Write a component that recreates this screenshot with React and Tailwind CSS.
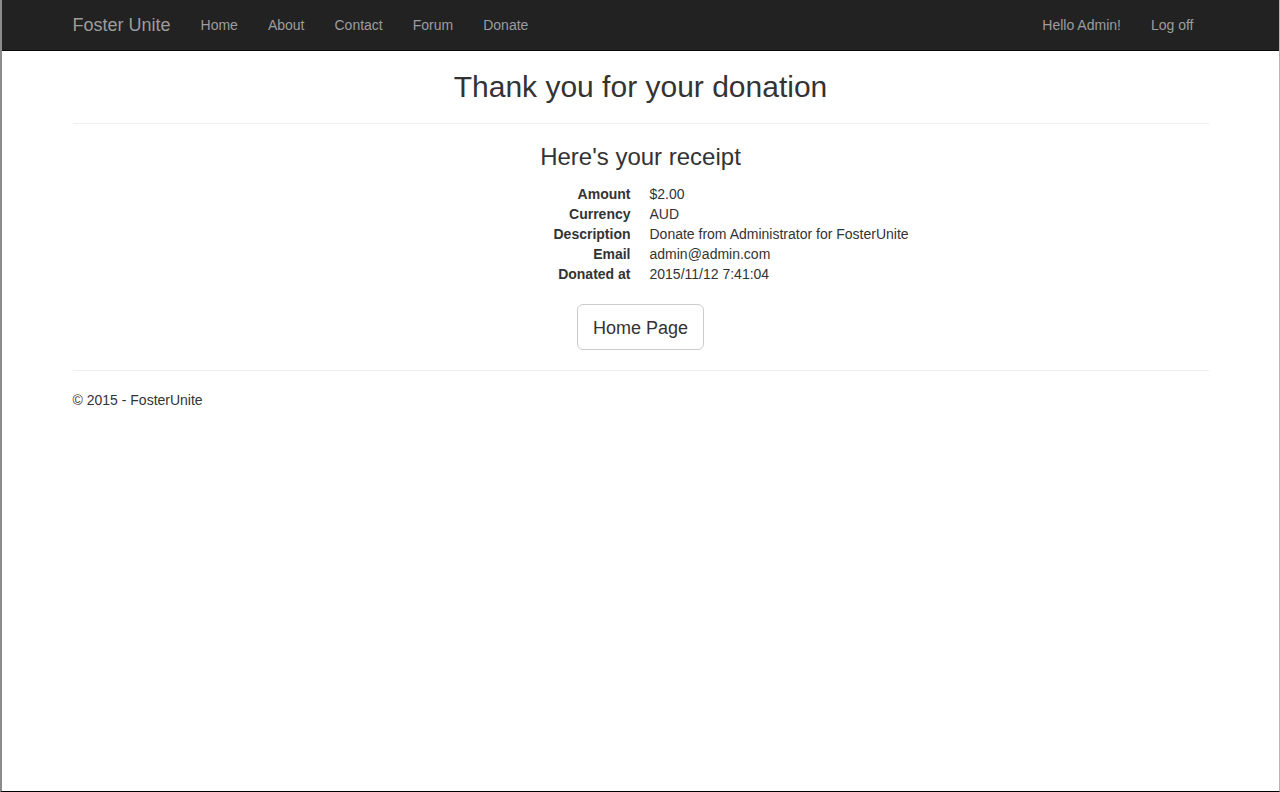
import React from "react";

const navLinks = ["Home", "About", "Contact", "Forum", "Donate"];

const receipt = [
  ["Amount", "$2.00"],
  ["Currency", "AUD"],
  ["Description", "Donate from Administrator for FosterUnite"],
  ["Email", "admin@admin.com"],
  ["Donated at", "2015/11/12 7:41:04"],
];

const App = () => {
  return (
    <div
      className="h-[792px] w-[1280px] bg-white border-l-2 border-r border-b border-l-[#8c8c8c] border-r-[#b5b5b5] border-b-black text-[#333] text-[14px] leading-5 overflow-hidden"
      style={{ fontFamily: '"Liberation Sans", Arial, sans-serif' }}
    >
      {/* navbar */}
      <nav className="h-[51px] bg-[#222] border-b border-[#080808]">
        <div className="w-[1136px] mx-auto flex items-center h-[50px]">
          <span className="text-[18px] text-[#9d9d9d] pr-[15px]">Foster Unite</span>
          {navLinks.map((l) => (
            <span key={l} className="px-[15px] text-[#9d9d9d]">
              {l}
            </span>
          ))}
          <div className="ml-auto flex">
            <span className="px-[15px] text-[#9d9d9d]">Hello Admin!</span>
            <span className="px-[15px] text-[#9d9d9d]">Log off</span>
          </div>
        </div>
      </nav>

      <main className="w-[1136px] mx-auto">
        <h2 className="mt-[19px] text-center text-[30px] leading-[33px] font-normal">
          Thank you for your donation
        </h2>
        <hr className="mt-5 border-0 border-t border-[#eee]" />
        <h3 className="mt-5 text-center text-[24px] leading-[26px] font-normal">
          Here's your receipt
        </h3>

        <dl className="mt-[14px] pl-[398px] grid grid-cols-[160px_1fr] gap-x-[19px]">
          {receipt.map(([k, v]) => (
            <React.Fragment key={k}>
              <dt className="text-right font-bold">{k}</dt>
              <dd>{v}</dd>
            </React.Fragment>
          ))}
        </dl>

        <div className="mt-5 flex justify-center">
          <button className="h-[46px] w-[127px] border border-[#ccc] rounded-[6px] bg-white text-[18px] text-[#333] pt-px">
            Home Page
          </button>
        </div>

        <hr className="mt-5 border-0 border-t border-[#eee]" />
        <footer className="mt-[19px]">
          <p>© 2015 - FosterUnite</p>
        </footer>
      </main>
    </div>
  );
};

export default App;
